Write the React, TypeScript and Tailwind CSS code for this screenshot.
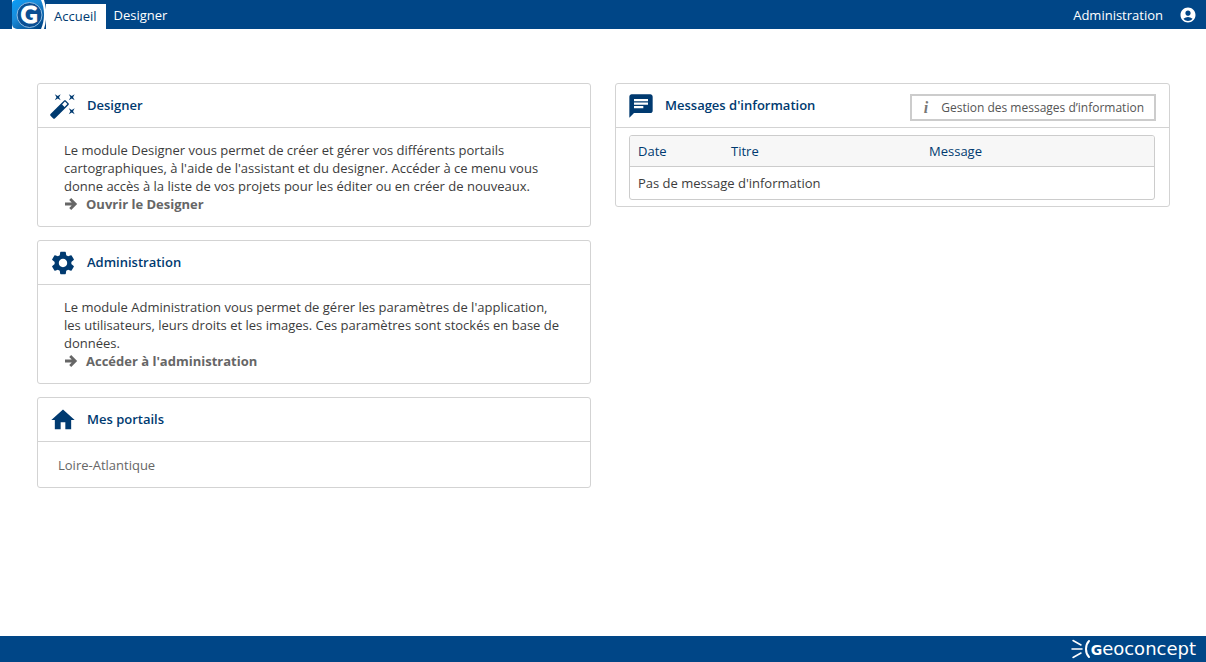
import type { ReactNode } from 'react';
import { MdAccountCircle, MdChat, MdHome, MdSettings } from 'react-icons/md';

interface PanelProps {
  icon: ReactNode;
  title: string;
  action?: ReactNode;
  children: ReactNode;
}

function Panel({ icon, title, action, children }: PanelProps) {
  return (
    <section className="rounded-[3px] border border-[#d3d3d3] bg-white">
      <div className="flex h-11 items-center border-b border-[#d3d3d3] pl-[11px] pr-[13px]">
        <span className="text-[28px] text-[#003a70]">{icon}</span>
        <h2 className="ml-[10px] flex-1 pb-0.5 font-semibold text-[#003a70]">{title}</h2>
        {action}
      </div>
      {children}
    </section>
  );
}

function WandIcon() {
  return (
    <svg viewBox="0 0 24 24" className="size-7" fill="currentColor" aria-hidden="true">
      <path d="M7.5 5.6L5 7l1.4-2.5L5 2l2.5 1.4L10 2 8.6 4.5 10 7 7.5 5.6m12 9.8L22 14l-1.4 2.5L22 19l-2.5-1.4L17 19l1.4-2.5L17 14l2.5 1.4M22 2l-1.4 2.5L22 7l-2.5-1.4L17 7l1.4-2.5L17 2l2.5 1.4L22 2m-8.66 10.78l2.44-2.44-2.12-2.12-2.44 2.44 2.12 2.12m1.03-5.49l2.34 2.34c.39.37.39 1.02 0 1.41L5.04 22.71c-.39.39-1.04.39-1.41 0l-2.34-2.34c-.39-.37-.39-1.02 0-1.41L12.96 7.29c.39-.39 1.04-.39 1.41 0z" />
    </svg>
  );
}

function ActionLink({ children }: { children: ReactNode }) {
  return (
    <a href="#" className="flex items-center gap-2 font-bold text-[#666]">
      <svg viewBox="0 0 14 14" className="size-[14px]" fill="none" stroke="currentColor" strokeWidth="2.8" aria-hidden="true">
        <path d="M1 7h10M6.2 2l5 5-5 5" />
      </svg>
      {children}
    </a>
  );
}

function AppLogo() {
  return (
    <svg viewBox="0 0 34 29" className="h-[29px] w-[34px]" role="img" aria-label="Geoconcept">
      <defs>
        <linearGradient id="logo-bg" x1="0" y1="0" x2="0.8" y2="1">
          <stop offset="0" stopColor="#0a9cf5" />
          <stop offset="0.45" stopColor="#1a8ad8" />
          <stop offset="1" stopColor="#004687" />
        </linearGradient>
      </defs>
      <path d="M0 0h34v29H0z" fill="#fff" />
      <path d="M4 0h25c4 9 4 20 0 29H5a5 5 0 0 1-5-5V4a4 4 0 0 1 4-4z" fill="url(#logo-bg)" />
      <circle cx="17.5" cy="15" r="12.5" fill="#0b4f93" stroke="#8fbde4" strokeWidth="1" />
      <text x="17" y="23" textAnchor="middle" fill="#fff" stroke="#fff" strokeWidth="1.2" fontSize="23" fontWeight="700" fontFamily="Lato, sans-serif">
        G
      </text>
      <path d="M32 0c3 9 3 20 0 29h2V0z" fill="#004687" />
    </svg>
  );
}

function FooterLogo() {
  return (
    <div className="flex items-center text-white">
      <svg viewBox="0 0 20 20" className="size-5" fill="none" stroke="currentColor" strokeWidth="1.5" strokeLinecap="round" aria-hidden="true">
        <path d="M2 1.5l8 4.5M1 10h10M2 18.5l8-4.5" />
        <path d="M18 2c-4 4-4 12 0 16" strokeWidth="2" />
      </svg>
      <span className="font-['DejaVu_Sans',sans-serif] text-[18px] leading-5">
        <span className="text-[14px] font-bold">G</span>eoconcept
      </span>
    </div>
  );
}

export default function App() {
  return (
    <div className="flex min-h-screen flex-col bg-white font-['Open_Sans',sans-serif] text-[13px] leading-[18px] text-[#3c3c3c]">
      <header className="flex h-[29px] items-stretch bg-[#004687] pl-3 pr-[9px] text-white">
        <AppLogo />
        <nav className="flex items-end">
          <a href="#" className="flex h-[25px] items-center bg-white pb-px pl-2 pr-[9px] text-[#003a70]">
            Accueil
          </a>
          <a href="#" className="flex h-full items-center px-2 pb-px pt-px">
            Designer
          </a>
        </nav>
        <div className="ml-auto flex items-center gap-4 pt-px">
          <a href="#">Administration</a>
          <button type="button" aria-label="Mon compte" className="text-[18px]">
            <MdAccountCircle />
          </button>
        </div>
      </header>

      <main className="grid flex-1 grid-cols-[554fr_555fr] items-start gap-6 pl-[37px] pr-9 pt-[54px]">
        <div className="flex flex-col gap-[13px]">
          <Panel icon={<WandIcon />} title="Designer">
            <div className="px-[26px] py-[13px]">
              <p>
                Le module Designer vous permet de créer et gérer vos différents portails cartographiques, à l'aide de
                l'assistant et du designer. Accéder à ce menu vous donne accès à la liste de vos projets pour les éditer
                ou en créer de nouveaux.
              </p>
              <ActionLink>Ouvrir le Designer</ActionLink>
            </div>
          </Panel>

          <Panel icon={<MdSettings />} title="Administration">
            <div className="px-[26px] py-[13px]">
              <p>
                Le module Administration vous permet de gérer les paramètres de l'application, les utilisateurs, leurs
                droits et les images. Ces paramètres sont stockés en base de données.
              </p>
              <ActionLink>Accéder à l'administration</ActionLink>
            </div>
          </Panel>

          <Panel icon={<MdHome />} title="Mes portails">
            <div className="px-5 pb-[13px] pt-[14px]">
              <a href="#" className="block text-[#666]">
                Loire-Atlantique
              </a>
            </div>
          </Panel>
        </div>

        <Panel
          icon={<MdChat />}
          title="Messages d'information"
          action={
            <button type="button" className="mt-1 flex h-[27px] items-center border-2 border-[#ccc] pl-3 pr-[10px] text-[12px] text-[#555]">
              <i className="mr-[13px] font-['Liberation_Serif',serif] text-[16px] font-bold text-[#777]">i</i>
              Gestion des messages d’information
            </button>
          }
        >
          <div className="pb-1.5 pl-[13px] pr-[14px] pt-[7px]">
            <div className="overflow-hidden rounded-[3px] border border-[#ccc]">
              <table className="w-full table-fixed text-left">
                <thead>
                  <tr className="h-[30px] border-b border-[#ccc] bg-[#f7f7f7] text-[#003a70]">
                    <th className="w-[93px] px-2 font-normal">Date</th>
                    <th className="w-[198px] px-2 font-normal">Titre</th>
                    <th className="px-2 font-normal">Message</th>
                  </tr>
                </thead>
                <tbody>
                  <tr className="h-[33px]">
                    <td colSpan={3} className="px-2">
                      Pas de message d'information
                    </td>
                  </tr>
                </tbody>
              </table>
            </div>
          </div>
        </Panel>
      </main>

      <footer className="flex h-[26px] items-center justify-end bg-[#004687] pr-[10px]">
        <FooterLogo />
      </footer>
    </div>
  );
}
